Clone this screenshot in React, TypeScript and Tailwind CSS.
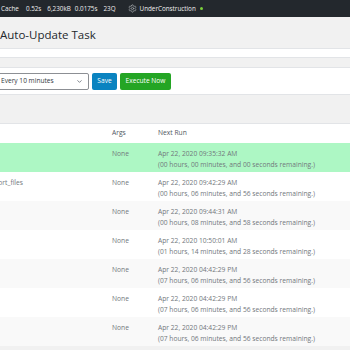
import { Settings, ChevronDown } from 'lucide-react'

const rows = [
  { hook: '', date: 'Apr 22, 2020 09:35:32 AM', left: '(00 hours, 00 minutes, and 00 seconds remaining.)', due: true },
  { hook: 'wp_privacy_delete_old_export_files', date: 'Apr 22, 2020 09:42:29 AM', left: '(00 hours, 06 minutes, and 56 seconds remaining.)' },
  { hook: '', date: 'Apr 22, 2020 09:44:31 AM', left: '(00 hours, 08 minutes, and 58 seconds remaining.)' },
  { hook: '', date: 'Apr 22, 2020 10:50:01 AM', left: '(01 hours, 14 minutes, and 28 seconds remaining.)' },
  { hook: '', date: 'Apr 22, 2020 04:42:29 PM', left: '(07 hours, 06 minutes, and 56 seconds remaining.)' },
  { hook: '', date: 'Apr 22, 2020 04:42:29 PM', left: '(07 hours, 06 minutes, and 56 seconds remaining.)' },
  { hook: '', date: 'Apr 22, 2020 04:42:29 PM', left: '(07 hours, 06 minutes, and 56 seconds remaining.)' },
]

export default function App() {
  return (
    <div className="w-[350px] h-[350px] overflow-hidden bg-[#f1f1f1] font-['Open_Sans',sans-serif]">
      {/* Admin bar */}
      <div className="h-[17px] bg-[#23282d] flex items-center text-[6.3px] text-[#eeeeee] whitespace-nowrap">
        <span className="ml-[1px]">Cache</span>
        <span className="ml-[7px]">0.52s</span>
        <span className="ml-[6px]">6,230kB</span>
        <span className="ml-[4px]">0.0175s</span>
        <span className="ml-[6px]">23Q</span>
        <Settings className="ml-[12px] w-[9px] h-[9px] text-[#a0a5aa]" strokeWidth={2} />
        <span className="ml-[3px]">UnderConstruction</span>
        <span className="ml-[4px] w-[3px] h-[3px] rounded-full bg-[#7ad03a]" />
      </div>

      {/* Heading */}
      <h1 className="h-[31px] flex items-center pt-[5px] text-[11.5px] text-[#23282d] whitespace-nowrap">
        Auto-Update Task
      </h1>

      <div className="h-[10px] bg-white border-y border-[#e2e4e7]" />

      <div className="h-[9px]" />

      {/* Settings box */}
      <div className="h-[28px] bg-white border-y border-[#e2e4e7] flex items-center gap-[3px]">
        <div className="-ml-[4px] w-[93px] h-[17px] border border-[#8c8f94] rounded-[2px] bg-white flex items-center justify-between pl-[4px] pr-[5px] text-[6.6px] text-[#32373c]">
          <span>Every 10 minutes</span>
          <ChevronDown className="w-[7px] h-[7px] text-[#555d66]" strokeWidth={2.5} />
        </div>
        <button className="w-[25px] h-[17px] rounded-[2px] bg-[#0a83c0] text-white text-[6.6px] flex items-center justify-center">
          Save
        </button>
        <button className="w-[51px] h-[17px] rounded-[2px] bg-[#24a524] text-white text-[6.6px] flex items-center justify-center">
          Execute Now
        </button>
      </div>

      <div className="h-[28px]" />

      {/* Table, scrolled sideways so the hook column is mostly out of view */}
      <div className="bg-white border-t border-[#e2e4e7] overflow-hidden">
        <div className="-ml-[113px] w-[463px] text-[6.7px] leading-[11px]">
          <div className="h-[19px] grid grid-cols-[225px_46px_1fr] pt-[3px] text-[#50575e]">
            <div />
            <div>Args</div>
            <div>Next Run</div>
          </div>
          {rows.map((r, i) => (
            <div
              key={i}
              className={`h-[29px] grid grid-cols-[225px_46px_1fr] pt-[5px] text-[#72777c] ${
                r.due ? 'bg-[#adf7c4]' : i % 2 === 0 ? 'bg-[#f9f9f9]' : 'bg-white'
              }`}
            >
              <div className="flex justify-end pr-[89px] whitespace-nowrap overflow-hidden">
                <span>{r.hook}</span>
              </div>
              <div>None</div>
              <div className="whitespace-nowrap">
                <div>{r.date}</div>
                <div>{r.left}</div>
              </div>
            </div>
          ))}
        </div>
      </div>
    </div>
  )
}
